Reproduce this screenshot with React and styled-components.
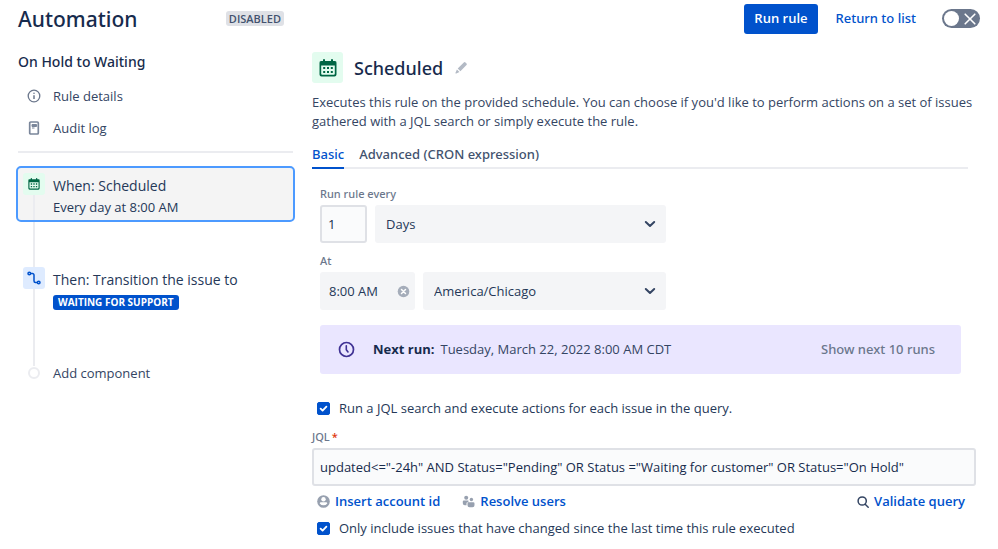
import React, { useState } from "react";
import styled, { createGlobalStyle } from "styled-components";

const mediumFont = `"Noto Sans", "Open Sans", sans-serif`;

const GlobalStyle = createGlobalStyle`
  * {
    box-sizing: border-box;
  }
  body {
    margin: 0;
    background: #fff;
    color: #172b4d;
    font-family: "Open Sans", "Noto Sans", sans-serif;
    font-size: 13px;
    line-height: 19px;
  }
  button, input, select {
    font: inherit;
    color: inherit;
    margin: 0;
  }
  h1, h2, h3, p, ul, ol {
    margin: 0;
    padding: 0;
  }
  svg {
    display: block;
    flex: none;
  }
`;

const Page = styled.div`
  padding: 0 18px 12px;
`;

const Header = styled.header`
  display: flex;
  align-items: center;
  height: 37px;
`;

const HeaderTitle = styled.div`
  display: flex;
  align-items: center;
  justify-content: space-between;
  flex: 0 0 266px;
`;

const Title = styled.h1`
  font-family: ${mediumFont};
  font-size: 21px;
  line-height: 36px;
  font-weight: 500;
`;

const Lozenge = styled.span`
  display: inline-block;
  padding: 0 ${(p) => (p.$bold ? "5px" : "3px")};
  border-radius: 3px;
  font-size: ${(p) => (p.$bold ? "10px" : "11px")};
  line-height: 15px;
  font-weight: ${(p) => (p.$bold ? 700 : 600)};
  background: ${(p) => (p.$bold ? "#0052cc" : "#dfe1e6")};
  color: ${(p) => (p.$bold ? "#fff" : "#42526e")};
`;

const Actions = styled.div`
  display: flex;
  align-items: center;
  margin-left: auto;
`;

const PrimaryButton = styled.button`
  height: 30px;
  padding: 0 10px;
  border: 0;
  border-radius: 3px;
  background: #0052cc;
  color: #fff;
  font-weight: 600;
`;

const ReturnLink = styled.a`
  margin: 0 26px 0 18px;
  color: #0052cc;
  font-family: ${mediumFont};
  font-weight: 500;
  text-decoration: none;
`;

const Toggle = styled.label`
  position: relative;
  display: flex;
  align-items: center;
  justify-content: space-between;
  flex-direction: ${(p) => (p.$on ? "row-reverse" : "row")};
  width: 38px;
  height: 19px;
  padding: 0 4px 0 2px;
  border-radius: 10px;
  background: ${(p) => (p.$on ? "#00875a" : "#6b778c")};
  input {
    position: absolute;
    inset: 0;
    opacity: 0;
  }
`;

const Knob = styled.span`
  width: 15px;
  height: 15px;
  border-radius: 50%;
  background: #fff;
`;

const Columns = styled.div`
  display: flex;
  gap: 19px;
`;

const Sidebar = styled.aside`
  flex: 0 0 275px;
  padding-top: 14px;
`;

const RuleName = styled.h2`
  font-family: ${mediumFont};
  font-size: 14px;
  line-height: 22px;
  font-weight: 500;
`;

const RuleLinks = styled.ul`
  list-style: none;
  padding: 7px 0;
  border-bottom: 2px solid #ebecf0;
`;

const RuleLink = styled.a`
  display: flex;
  align-items: center;
  gap: 12px;
  height: 32px;
  padding-left: 9px;
  color: #344563;
  text-decoration: none;
`;

const Steps = styled.ol`
  list-style: none;
  margin: 13px -2px 0;
`;

const Rail = styled.div`
  display: flex;
  flex-direction: column;
  align-items: center;
  width: 22px;
`;

const RailLine = styled.span`
  flex: 1;
  width: 2px;
  background: #ebecf0;
`;

const StepBody = styled.div`
  padding: 2px 0;
`;

const Step = styled.div`
  display: flex;
  gap: 8px;
  padding: 0 5px;
  border: solid ${(p) => (p.$active ? "#4c9aff" : "transparent")};
  border-width: ${(p) => (p.$active ? "2px" : "0 2px")};
  border-radius: 5px;
  background: ${(p) => (p.$active ? "#f4f4f4" : "none")};
  ${Rail}, ${StepBody} {
    margin-top: ${(p) => (p.$active ? "5px" : "0")};
  }
`;

const Connector = styled.div`
  width: 2px;
  height: ${(p) => p.$height};
  margin-left: 17px;
  background: #ebecf0;
`;

const Tile = styled.span`
  display: flex;
  align-items: center;
  justify-content: center;
  width: ${(p) => p.$size};
  height: ${(p) => p.$size};
  border-radius: 3px;
  background: ${(p) => p.$bg};
  color: ${(p) => p.$color};
`;

const StepTitle = styled.h3`
  font-size: 14px;
  line-height: 22px;
  font-weight: 400;
  color: #253858;
`;

const StepText = styled.p`
  line-height: 21px;
  color: #253858;
`;

const AddStep = styled.button`
  display: flex;
  align-items: center;
  gap: 13px;
  height: 14px;
  padding: 0 0 0 12px;
  border: 0;
  background: none;
  color: #344563;
`;

const Dot = styled.span`
  width: 12px;
  height: 12px;
  border: 2px solid #ebecf0;
  border-radius: 50%;
  background: #fff;
`;

const Main = styled.main`
  flex: 1;
  min-width: 0;
  padding: 15px 4px 0 0;
`;

const MainHeader = styled.div`
  display: flex;
  align-items: center;
  gap: 11px;
`;

const MainTitle = styled.h2`
  font-family: ${mediumFont};
  font-size: 18px;
  line-height: 30px;
  font-weight: 500;
`;

const IconButton = styled.button`
  display: flex;
  padding: 0;
  border: 0;
  background: none;
  color: ${(p) => p.$color};
`;

const Description = styled.p`
  margin-top: 10px;
  color: #344563;
`;

const Tabs = styled.div`
  display: flex;
  gap: 15px;
  margin: 14px 8px 0 0;
  border-bottom: 2px solid #ebecf0;
`;

const Tab = styled.button`
  height: 24px;
  margin-bottom: -2px;
  padding: 0 0 3px;
  border: 0;
  border-bottom: 2px solid ${(p) => (p.$active ? "#0052cc" : "transparent")};
  background: none;
  color: ${(p) => (p.$active ? "#0052cc" : "#42526e")};
  font-family: ${mediumFont};
  font-weight: 500;
`;

const Panel = styled.div`
  padding: 17px 15px 0 8px;
`;

const FieldLabel = styled.label`
  display: block;
  margin-bottom: 3px;
  font-family: ${mediumFont};
  font-size: 11px;
  line-height: 16px;
  font-weight: 500;
  color: #6b778c;
`;

const FieldRow = styled.div`
  display: flex;
  gap: 8px;
  max-width: 346px;
  margin-bottom: 10px;
`;

const TextInput = styled.input`
  width: ${(p) => p.$width || "100%"};
  height: 38px;
  padding: 0 6px;
  border: 2px solid #dfe1e6;
  border-radius: 3px;
  background: #fafbfc;
  outline: 0;
`;

const SelectBox = styled.div`
  display: grid;
  flex: 1;
  align-items: center;
  height: 38px;
  border-radius: 3px;
  background: #f4f5f7;
  color: #253858;
  select, svg {
    grid-area: 1 / 1;
  }
  select {
    appearance: none;
    width: 100%;
    height: 100%;
    padding: 0 30px 0 11px;
    border: 0;
    background: none;
    outline: 0;
  }
  svg {
    justify-self: end;
    margin-right: 10px;
    pointer-events: none;
  }
`;

const TimeBox = styled.div`
  display: flex;
  align-items: center;
  width: 95px;
  height: 38px;
  padding: 0 5px 0 9px;
  border-radius: 3px;
  background: #f4f5f7;
  color: #253858;
  input {
    flex: 1;
    min-width: 0;
    padding: 0;
    border: 0;
    background: none;
    outline: 0;
  }
`;

const NextRun = styled.div`
  display: flex;
  align-items: center;
  min-height: 49px;
  margin-top: 15px;
  padding: 0 26px 0 18px;
  border-radius: 3px;
  background: #eae6ff;
  color: #344563;
  strong {
    margin: 0 6px 0 18px;
    color: #172b4d;
    font-weight: 700;
  }
`;

const SubtleButton = styled.button`
  margin-left: auto;
  padding: 0;
  border: 0;
  background: none;
  color: #6b778c;
  font-family: ${mediumFont};
  font-weight: 500;
`;

const CheckLabel = styled.label`
  display: flex;
  align-items: center;
  gap: 9px;
  padding-left: 5px;
  margin-top: ${(p) => p.$top};
  color: #253858;
`;

const CheckBox = styled.span`
  display: grid;
  width: 13px;
  height: 13px;
  input, svg {
    grid-area: 1 / 1;
  }
  input {
    appearance: none;
    width: 13px;
    height: 13px;
    border: 1px solid #0052cc;
    border-radius: 2px;
  }
  input:checked {
    background: #0052cc;
  }
  svg {
    pointer-events: none;
  }
`;

const JqlField = styled.div`
  margin-top: 11px;
`;

const Required = styled.span`
  margin-left: 2px;
  color: #de350b;
`;

const Tools = styled.div`
  display: flex;
  gap: 22px;
  margin-top: 6px;
  padding: 0 11px 0 5px;
`;

const ToolButton = styled.button`
  display: flex;
  align-items: center;
  gap: 5px;
  margin-left: ${(p) => (p.$end ? "auto" : "0")};
  padding: 0;
  border: 0;
  background: none;
  color: #0052cc;
  font-weight: 600;
  svg {
    color: ${(p) => (p.$end ? "#344563" : "#97a0af")};
  }
`;

const CalendarIcon = ({ size }) => (
  <svg width={size} height={size} viewBox="0 0 18 18" fill="currentColor">
    <path
      fillRule="evenodd"
      d="M2.5 2H4V1a1 1 0 0 1 2 0v1h6V1a1 1 0 0 1 2 0v1h1.500A1.800 1.800 0 0 1 17.500 4v11.500a2 2 0 0 1-2 2h-13a2 2 0 0 1-2-2V4a1.800 1.800 0 0 1 2-2zM2.200 6.500v8.300a1 1 0 0 0 1 1h11.600a1 1 0 0 0 1-1V6.500z"
    />
    <path d="M4.200 8h2v2h-2zM8 8h2v2H8zM11.800 8h2v2h-2zM4.200 12h2v2h-2zM8 12h2v2H8zM11.800 12h2v2h-2z" />
  </svg>
);

const InfoIcon = () => (
  <svg width="14" height="14" viewBox="0 0 14 14" fill="none" stroke="#6b778c">
    <circle cx="7" cy="7" r="5.800" strokeWidth="1.300" />
    <path d="M7 6.300v3.700" strokeWidth="1.500" />
    <circle cx="7" cy="4.300" r=".8" fill="#6b778c" stroke="none" />
  </svg>
);

const LogIcon = () => (
  <svg width="14" height="14" viewBox="0 0 14 14" fill="none" stroke="#7a869a">
    <rect x="2.700" y="1" width="8.600" height="12" rx="1" strokeWidth="1.700" />
    <path d="M5 3.500h4.500v2H5zM5 7h2.500" fill="#7a869a" strokeWidth="1" />
  </svg>
);

const TransitionIcon = () => (
  <svg width="14" height="14" viewBox="0 0 14 14" fill="none" stroke="#0052cc" strokeWidth="1.500">
    <circle cx="2.300" cy="2.500" r="1.300" />
    <path d="M3.600 2.500h1.900a1.500 1.500 0 0 1 1.500 1.500v6a1.500 1.500 0 0 0 1.500 1.500h1.900" />
    <circle cx="11.700" cy="11.500" r="1.300" />
  </svg>
);

const PencilIcon = () => (
  <svg width="14" height="14" viewBox="0 0 14 14" fill="currentColor">
    <path d="M9.800 1.400a1.200 1.200 0 0 1 1.700 0l1 1a1.200 1.200 0 0 1 0 1.700L6.400 10.200 3.700 7.500zM2.900 8.400l2.600 2.600-3.200 1.500a.6.6 0 0 1-.8-.8z" />
  </svg>
);

const ChevronIcon = () => (
  <svg width="12" height="12" viewBox="0 0 12 12" fill="none" stroke="#344563" strokeWidth="2" strokeLinecap="round" strokeLinejoin="round">
    <path d="M1.800 4L6 8l4.200-4" />
  </svg>
);

const ClearIcon = () => (
  <svg width="13" height="13" viewBox="0 0 13 13">
    <circle cx="6.500" cy="6.500" r="5.800" fill="#a5adba" />
    <path d="M4.500 4.500l4 4M8.500 4.500l-4 4" stroke="#fff" strokeWidth="1.500" strokeLinecap="round" />
  </svg>
);

const CrossIcon = () => (
  <svg width="12" height="12" viewBox="0 0 12 12" stroke="#fff" strokeWidth="1.600" strokeLinecap="round">
    <path d="M1.200 1.200l9.600 9.600M10.800 1.200l-9.600 9.600" />
  </svg>
);

const ClockIcon = () => (
  <svg width="17" height="17" viewBox="0 0 17 17" fill="none" stroke="#403294" strokeLinecap="round" strokeLinejoin="round">
    <circle cx="8.500" cy="8.500" r="7" strokeWidth="1.700" />
    <path d="M8.300 4.800v3.900l1.700 2.200" strokeWidth="1.600" />
  </svg>
);

const CheckIcon = () => (
  <svg width="13" height="13" viewBox="0 0 13 13" fill="none" stroke="#fff" strokeWidth="1.800" strokeLinecap="round" strokeLinejoin="round">
    <path d="M3.600 6.600l2 2 3.800-4" />
  </svg>
);

const PersonIcon = () => (
  <svg width="13" height="13" viewBox="0 0 13 13">
    <circle cx="6.500" cy="6.500" r="6.300" fill="currentColor" />
    <circle cx="6.500" cy="4.300" r="2.200" fill="#fff" />
    <path d="M2.700 8.500a1.300 1.300 0 0 1 1.300-1.300h5a1.300 1.300 0 0 1 1.300 1.300 4.800 4.800 0 0 1-7.600 0z" fill="#fff" />
  </svg>
);

const PeopleIcon = () => (
  <svg width="13" height="13" viewBox="0 0 13 13" fill="currentColor">
    <circle cx="4.200" cy="2.700" r="2" />
    <circle cx="9.400" cy="4.500" r="1.700" />
    <path d="M.8 6.500a1 1 0 0 1 1-1h4.600v1.700H5.600a1.200 1.200 0 0 0-1.100 1.200v1.900H2.800a2 2 0 0 1-2-2zM5.500 8.500a1.300 1.300 0 0 1 1.200-1.300h4.600A1.300 1.300 0 0 1 12.500 8.500v1.700a2 2 0 0 1-2 2h-3a2 2 0 0 1-2-2z" />
  </svg>
);

const SearchIcon = () => (
  <svg width="12" height="12" viewBox="0 0 12 12" fill="none" stroke="currentColor" strokeWidth="1.500" strokeLinecap="round">
    <circle cx="5.200" cy="5" r="4.100" />
    <path d="M8.200 8.200l3 3" />
  </svg>
);

function Check({ checked, onChange, top, children }) {
  return (
    <CheckLabel $top={top}>
      <CheckBox>
        <input type="checkbox" checked={checked} onChange={(e) => onChange(e.target.checked)} />
        {checked && <CheckIcon />}
      </CheckBox>
      {children}
    </CheckLabel>
  );
}

function RuleSidebar() {
  return (
    <Sidebar>
      <RuleName>On Hold to Waiting</RuleName>
      <RuleLinks>
        <li>
          <RuleLink href="#details"><InfoIcon />Rule details</RuleLink>
        </li>
        <li>
          <RuleLink href="#audit"><LogIcon />Audit log</RuleLink>
        </li>
      </RuleLinks>
      <Steps>
        <li>
          <Step $active>
            <Rail>
              <Tile $size="22px" $bg="#e3fcef" $color="#006644"><CalendarIcon size={12} /></Tile>
              <RailLine />
            </Rail>
            <StepBody>
              <StepTitle>When: Scheduled</StepTitle>
              <StepText>Every day at 8:00 AM</StepText>
            </StepBody>
          </Step>
          <Connector $height="45px" />
        </li>
        <li>
          <Step>
            <Rail>
              <Tile $size="22px" $bg="#deebff" $color="#0052cc"><TransitionIcon /></Tile>
              <RailLine />
            </Rail>
            <StepBody>
              <StepTitle>Then: Transition the issue to</StepTitle>
              <StepText><Lozenge $bold>WAITING FOR SUPPORT</Lozenge></StepText>
            </StepBody>
          </Step>
          <Connector $height="52px" />
        </li>
        <li>
          <AddStep type="button"><Dot />Add component</AddStep>
        </li>
      </Steps>
    </Sidebar>
  );
}

function App() {
  const [enabled, setEnabled] = useState(false);
  const [tab, setTab] = useState("basic");
  const [count, setCount] = useState("1");
  const [time, setTime] = useState("8:00 AM");
  const [runJql, setRunJql] = useState(true);
  const [onlyChanged, setOnlyChanged] = useState(true);
  const [jql, setJql] = useState(
    'updated<="-24h" AND Status="Pending" OR Status ="Waiting for customer" OR Status="On Hold"'
  );

  return (
    <Page>
      <GlobalStyle />
      <Header>
        <HeaderTitle>
          <Title>Automation</Title>
          <Lozenge>DISABLED</Lozenge>
        </HeaderTitle>
        <Actions>
          <PrimaryButton type="button">Run rule</PrimaryButton>
          <ReturnLink href="#list">Return to list</ReturnLink>
          <Toggle $on={enabled}>
            <input
              type="checkbox"
              aria-label="Rule enabled"
              checked={enabled}
              onChange={(e) => setEnabled(e.target.checked)}
            />
            <Knob />
            {!enabled && <CrossIcon />}
          </Toggle>
        </Actions>
      </Header>
      <Columns>
        <RuleSidebar />
        <Main>
          <MainHeader>
            <Tile $size="31px" $bg="#e3fcef" $color="#006644"><CalendarIcon size={18} /></Tile>
            <MainTitle>Scheduled</MainTitle>
            <IconButton type="button" $color="#b3bac5" aria-label="Edit"><PencilIcon /></IconButton>
          </MainHeader>
          <Description>
            Executes this rule on the provided schedule. You can choose if you'd like to perform actions on a set of issues gathered with a JQL search or simply execute the rule.
          </Description>
          <Tabs role="tablist">
            <Tab type="button" role="tab" $active={tab === "basic"} onClick={() => setTab("basic")}>
              Basic
            </Tab>
            <Tab type="button" role="tab" $active={tab === "cron"} onClick={() => setTab("cron")}>
              Advanced (CRON expression)
            </Tab>
          </Tabs>
          <Panel>
            <FieldLabel htmlFor="count">Run rule every</FieldLabel>
            <FieldRow>
              <TextInput id="count" $width="47px" value={count} onChange={(e) => setCount(e.target.value)} />
              <SelectBox>
                <select aria-label="Unit" defaultValue="Days">
                  <option>Minutes</option>
                  <option>Hours</option>
                  <option>Days</option>
                </select>
                <ChevronIcon />
              </SelectBox>
            </FieldRow>
            <FieldLabel htmlFor="time">At</FieldLabel>
            <FieldRow>
              <TimeBox>
                <input id="time" value={time} onChange={(e) => setTime(e.target.value)} />
                <IconButton type="button" aria-label="Clear time" onClick={() => setTime("")}><ClearIcon /></IconButton>
              </TimeBox>
              <SelectBox>
                <select aria-label="Time zone" defaultValue="America/Chicago">
                  <option>America/Chicago</option>
                  <option>America/New_York</option>
                </select>
                <ChevronIcon />
              </SelectBox>
            </FieldRow>
            <NextRun>
              <ClockIcon />
              <strong>Next run:</strong>
              Tuesday, March 22, 2022 8:00 AM CDT
              <SubtleButton type="button">Show next 10 runs</SubtleButton>
            </NextRun>
          </Panel>
          <Check checked={runJql} onChange={setRunJql} top="25px">
            Run a JQL search and execute actions for each issue in the query.
          </Check>
          <JqlField>
            <FieldLabel htmlFor="jql">JQL<Required>*</Required></FieldLabel>
            <TextInput id="jql" value={jql} onChange={(e) => setJql(e.target.value)} />
          </JqlField>
          <Tools>
            <ToolButton type="button"><PersonIcon />Insert account id</ToolButton>
            <ToolButton type="button"><PeopleIcon />Resolve users</ToolButton>
            <ToolButton type="button" $end><SearchIcon />Validate query</ToolButton>
          </Tools>
          <Check checked={onlyChanged} onChange={setOnlyChanged} top="8px">
            Only include issues that have changed since the last time this rule executed
          </Check>
        </Main>
      </Columns>
    </Page>
  );
}

export default App;
